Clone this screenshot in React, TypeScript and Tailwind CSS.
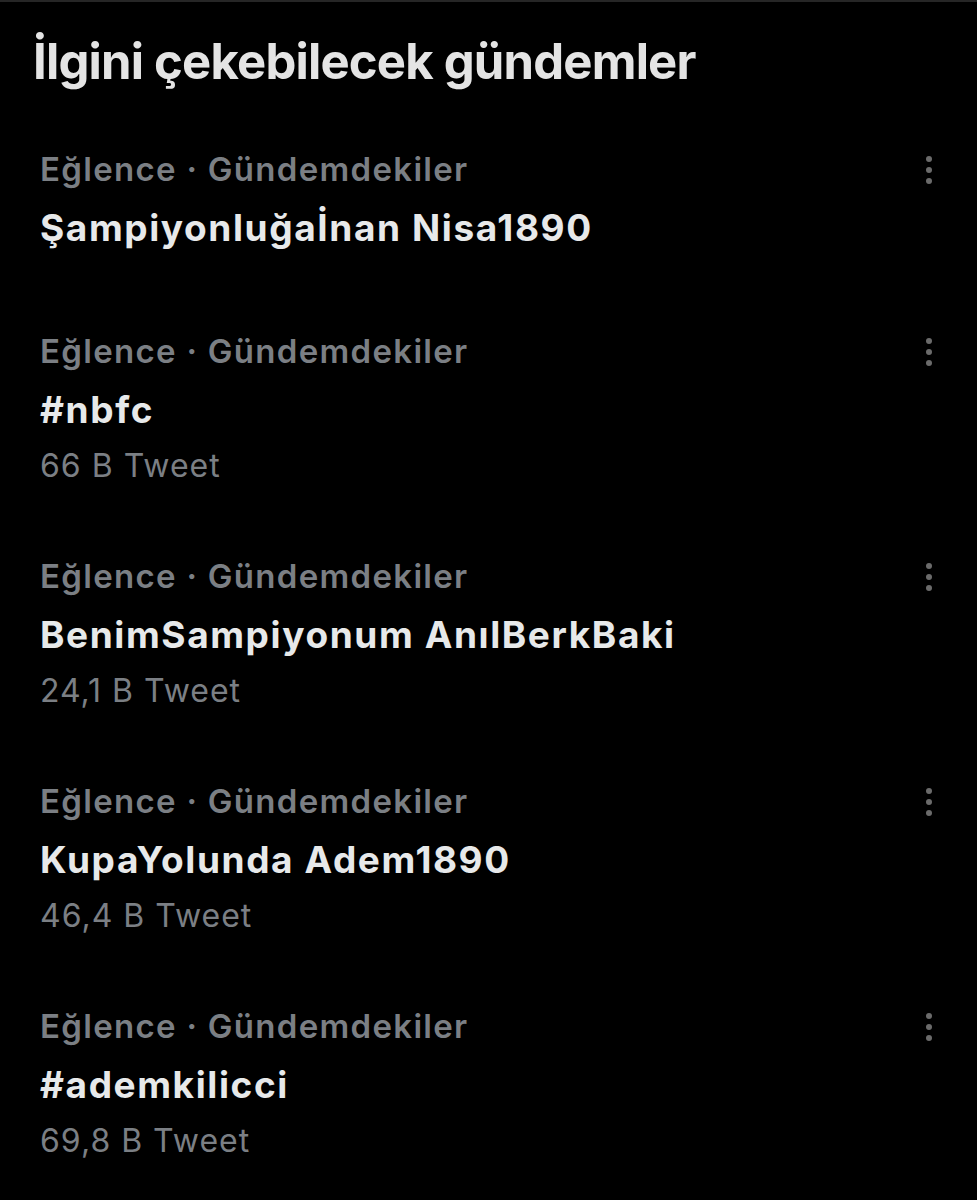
import React from "react";

const rows = [
  { title: "Şampiyonluğaİnan Nisa1890", count: "", pb: "pb-[67px]" },
  { title: "#nbfc", count: "66 B Tweet", pb: "pb-[54px]" },
  { title: "BenimSampiyonum AnılBerkBaki", count: "24,1 B Tweet", pb: "pb-[54px]" },
  { title: "KupaYolunda Adem1890", count: "46,4 B Tweet", pb: "pb-[54px]" },
  { title: "#ademkilicci", count: "69,8 B Tweet", pb: "pb-[54px]" },
];

function Dots() {
  return (
    <div className="flex flex-col items-center gap-[5px]">
      <span className="block w-[6px] h-[6px] rounded-full bg-[#6b6b6b]" />
      <span className="block w-[6px] h-[6px] rounded-full bg-[#6b6b6b]" />
      <span className="block w-[6px] h-[6px] rounded-full bg-[#6b6b6b]" />
    </div>
  );
}

export default function App() {
  return (
    <div
      className="w-[977px] h-[1200px] bg-black overflow-hidden border-t-2 border-[#262626]"
      style={{ fontFamily: "Inter, 'Noto Sans', sans-serif" }}
    >
      <div className="pl-[33px] pt-[30px] h-[139px]">
        <h1 className="text-[49px] leading-[60px] font-bold text-[#e4e4e4] tracking-[-0.8px]">
          İlgini çekebilecek gündemler
        </h1>
      </div>
      {rows.map((r, i) => (
        <div key={i} className={`pl-[40px] pr-[45px] ${r.pb}`}>
          <div className="flex items-center justify-between h-[58px]">
            <span className="text-[33px] font-semibold text-[#7b7f84] tracking-[1.3px]">
              Eğlence · Gündemdekiler
            </span>
            <Dots />
          </div>
          <div className="h-[57px] flex items-center">
            <span className="text-[37px] font-bold text-[#e7e9ea] tracking-[1.6px]">{r.title}</span>
          </div>
          {r.count && (
            <div className="h-[56px] flex items-center">
              <span className="text-[32px] font-normal text-[#7b7f84] tracking-[1px]">{r.count}</span>
            </div>
          )}
        </div>
      ))}
    </div>
  );
}
